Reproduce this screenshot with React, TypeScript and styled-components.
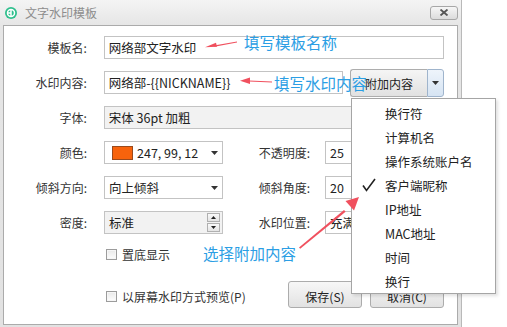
import styled, { createGlobalStyle } from 'styled-components'

const GlobalStyle = createGlobalStyle`
  html, body {
    margin: 0;
    padding: 0;
    background: #fff;
  }
  body {
    font-family: "Noto Sans CJK SC", "Noto Sans", sans-serif;
    font-size: 12px;
    color: #222;
  }
`

const Stage = styled.div`
  position: relative;
  width: 507px;
  height: 327px;
  overflow: hidden;
`

const Window = styled.div`
  width: 462px;
  height: 327px;
  box-sizing: border-box;
  display: flex;
  flex-direction: column;
  padding: 0 3px 2px 3px;
  background: linear-gradient(#f4f4f4, #e6e6e6 25px, #e2e2e2);
  border-right: 1px solid #b9b9b9;
`

const TitleBar = styled.div`
  height: 25px;
  display: flex;
  align-items: center;
  justify-content: space-between;
  padding-left: 2px;
`

const TitleLeft = styled.div`
  display: flex;
  align-items: center;
  gap: 8px;
`

const Title = styled.span`
  font-size: 12px;
  color: #8d8d8d;
`

const CloseButton = styled.div`
  width: 28px;
  height: 14px;
  box-sizing: border-box;
  border: 1px solid #a7a7a7;
  border-radius: 3px;
  background: linear-gradient(#f6f6f6, #dcdcdc);
  display: flex;
  align-items: center;
  justify-content: center;
`

const Panel = styled.div`
  flex: 1;
  background: #fff;
  border: 1px solid #ababab;
  padding: 10px 13px 0 0;
  display: flex;
  flex-direction: column;
`

const Row = styled.div`
  display: flex;
  align-items: center;
  height: 23px;
  margin-bottom: 12px;
`

const Label = styled.div<{ $right?: boolean }>`
  width: ${p => (p.$right ? '87px' : '83px')};
  margin-right: ${p => (p.$right ? '15px' : '17px')};
  text-align: right;
  color: #333;
  white-space: nowrap;
`

const Field = styled.div<{ $w: number; $muted?: boolean }>`
  width: ${p => p.$w}px;
  height: 23px;
  box-sizing: border-box;
  border: 1px solid #c3c3c3;
  background: ${p => (p.$muted ? '#f2f2f2' : '#fff')};
  padding: 0 4px 0 4px;
  display: flex;
  align-items: center;
  gap: 4px;
  white-space: nowrap;
  overflow: hidden;
`

const FieldText = styled.span`
  flex: 1;
  font-size: 12.5px;
  color: #222;
`

const Swatch = styled.span`
  width: 21px;
  height: 14px;
  box-sizing: border-box;
  margin-left: 3px;
  border: 1px solid #9a4a1c;
  background: rgb(247, 99, 12);
`

const Spinner = styled.div`
  width: 13px;
  height: 19px;
  display: flex;
  flex-direction: column;
  gap: 1px;
  margin-right: -2px;
`

const SpinBtn = styled.div`
  flex: 1;
  box-sizing: border-box;
  border: 1px solid #b0b0b0;
  background: linear-gradient(#fafafa, #e4e4e4);
  display: flex;
  align-items: center;
  justify-content: center;
`

const SplitButton = styled.div`
  display: flex;
  height: 28px;
  margin-left: 7px;
  align-self: flex-start;
  margin-top: -2px;
`

const SplitMain = styled.div`
  width: 77px;
  box-sizing: border-box;
  border: 1px solid #adadad;
  border-right: none;
  border-radius: 3px 0 0 3px;
  background: linear-gradient(#f5f5f5, #e1e1e1);
  display: flex;
  align-items: center;
  justify-content: center;
  color: #222;
`

const SplitArrow = styled.div`
  width: 17px;
  box-sizing: border-box;
  border: 1px solid #9fb4cc;
  border-radius: 0 3px 3px 0;
  background: linear-gradient(#eef4fb, #d6e4f3);
  display: flex;
  align-items: center;
  justify-content: center;
`

const CheckRow = styled.div`
  display: flex;
  align-items: center;
  height: 16px;
  padding-left: 102px;
  gap: 5px;
  color: #333;
`

const Box = styled.span`
  width: 11px;
  height: 11px;
  box-sizing: border-box;
  border: 1px solid #9c9c9c;
  background: linear-gradient(#e9e9e9, #fdfdfd);
  box-shadow: inset 0 0 0 1px #f6f6f6;
`

const BottomRow = styled.div`
  display: flex;
  align-items: center;
  height: 27px;
  margin-top: 19px;
`

const BottomCheck = styled(CheckRow)`
  flex: 1;
  padding-top: 3px;
`

const Buttons = styled.div`
  display: flex;
  gap: 8px;
`

const Button = styled.div`
  width: 74px;
  height: 27px;
  box-sizing: border-box;
  border: 1px solid #acacac;
  border-radius: 3px;
  background: linear-gradient(#f7f7f7, #e2e2e2);
  display: flex;
  align-items: center;
  justify-content: center;
  padding-top: 3px;
  color: #222;
`

const Menu = styled.div`
  position: absolute;
  left: 351px;
  top: 98px;
  width: 145px;
  box-sizing: border-box;
  padding: 2px 0 0;
  background: #fff;
  border: 1px solid #a5a5a5;
  box-shadow: 2px 2px 3px rgba(0, 0, 0, 0.12);
`

const MenuItem = styled.div`
  position: relative;
  height: 24px;
  display: flex;
  align-items: center;
  padding-left: 33px;
  font-size: 12.5px;
  color: #222;
`

const CheckMark = styled.svg`
  position: absolute;
  left: 10px;
  top: 5px;
`

const Overlay = styled.svg`
  position: absolute;
  left: 0;
  top: 0;
  pointer-events: none;
`

const Note = styled.span<{ $x: number; $y: number }>`
  position: absolute;
  left: ${p => p.$x}px;
  top: ${p => p.$y}px;
  font-size: 15.5px;
  line-height: 18px;
  color: #2b9ee4;
  white-space: nowrap;
`

const Caret = () => (
  <svg width="7" height="4" viewBox="0 0 7 4">
    <path d="M0 0h7L3.5 4z" fill="#333" />
  </svg>
)

const menuItems = ['换行符', '计算机名', '操作系统账户名', '客户端昵称', 'IP地址', 'MAC地址', '时间', '换行']

const App = () => {
  return (
    <>
      <GlobalStyle />
      <Stage>
        <Window>
          <TitleBar>
            <TitleLeft>
              <svg width="12" height="12" viewBox="0 0 13 13">
                <circle cx="6.5" cy="6.5" r="6.5" fill="#2fbf8d" />
                <circle cx="6.5" cy="6.5" r="3.8" fill="none" stroke="#fff" strokeWidth="1.6" />
                <path d="M6.5 2.7v7.6M2.7 6.5h3.8" stroke="#fff" strokeWidth="1.6" />
              </svg>
              <Title>文字水印模板</Title>
            </TitleLeft>
            <CloseButton>
              <svg width="10" height="7" viewBox="0 0 10 7">
                <path d="M1.5 0.5l7 6M8.5 0.5l-7 6" stroke="#555" strokeWidth="1.8" />
              </svg>
            </CloseButton>
          </TitleBar>
          <Panel>
            <Row>
              <Label>模板名:</Label>
              <Field $w={341}>
                <FieldText>网络部文字水印</FieldText>
              </Field>
            </Row>
            <Row>
              <Label>水印内容:</Label>
              <Field $w={240}>
                <FieldText>网络部-{'{{NICKNAME}}'}</FieldText>
              </Field>
              <SplitButton>
                <SplitMain>附加内容</SplitMain>
                <SplitArrow>
                  <Caret />
                </SplitArrow>
              </SplitButton>
            </Row>
            <Row>
              <Label>字体:</Label>
              <Field $w={341} $muted>
                <FieldText>宋体 36pt 加粗</FieldText>
              </Field>
            </Row>
            <Row>
              <Label>颜色:</Label>
              <Field $w={119}>
                <Swatch />
                <FieldText>247, 99, 12</FieldText>
                <Caret />
              </Field>
              <Label $right>不透明度:</Label>
              <Field $w={119}>
                <FieldText>25</FieldText>
              </Field>
            </Row>
            <Row>
              <Label>倾斜方向:</Label>
              <Field $w={119}>
                <FieldText>向上倾斜</FieldText>
                <Caret />
              </Field>
              <Label $right>倾斜角度:</Label>
              <Field $w={119}>
                <FieldText>20</FieldText>
              </Field>
            </Row>
            <Row>
              <Label>密度:</Label>
              <Field $w={119} $muted>
                <FieldText>标准</FieldText>
                <Spinner>
                  <SpinBtn>
                    <svg width="5" height="3" viewBox="0 0 5 3">
                      <path d="M0 3h5L2.5 0z" fill="#222" />
                    </svg>
                  </SpinBtn>
                  <SpinBtn>
                    <svg width="5" height="3" viewBox="0 0 5 3">
                      <path d="M0 0h5L2.5 3z" fill="#222" />
                    </svg>
                  </SpinBtn>
                </Spinner>
              </Field>
              <Label $right>水印位置:</Label>
              <Field $w={119}>
                <FieldText>充满</FieldText>
              </Field>
            </Row>
            <CheckRow>
              <Box />
              置底显示
            </CheckRow>
            <BottomRow>
              <BottomCheck>
                <Box />
                以屏幕水印方式预览(P)
              </BottomCheck>
              <Buttons>
                <Button>保存(S)</Button>
                <Button>取消(C)</Button>
              </Buttons>
            </BottomRow>
          </Panel>
        </Window>

        <Menu>
          {menuItems.map(item => (
            <MenuItem key={item}>
              {item === '客户端昵称' && (
                <CheckMark width="14" height="14" viewBox="0 0 14 14">
                  <path d="M1 7.5l3.5 5L13 1" fill="none" stroke="#222" strokeWidth="1.6" />
                </CheckMark>
              )}
              {item}
            </MenuItem>
          ))}
        </Menu>

        <Overlay width="507" height="327" viewBox="0 0 507 327">
          <g fill="#f0505e">
            <path d="M237 41.6L214 45.6l0.4 1.2L237 42.4z" />
            <path d="M205 47.3l11-4.6l1 4z" />
            <path d="M272 81.6L249 80.4v1.2L272 82.4z" />
            <path d="M240 80.8l10-3.4v6.6z" />
            <path d="M299 247.5L344 210l1.6 1.8L300.2 248.8z" />
            <path d="M359 197l-5 13.5l-8.5-9.5z" />
          </g>
        </Overlay>
        <Note $x={244} $y={33}>填写模板名称</Note>
        <Note $x={274} $y={74}>填写水印内容</Note>
        <Note $x={203} $y={244}>选择附加内容</Note>
      </Stage>
    </>
  )
}

export default App
